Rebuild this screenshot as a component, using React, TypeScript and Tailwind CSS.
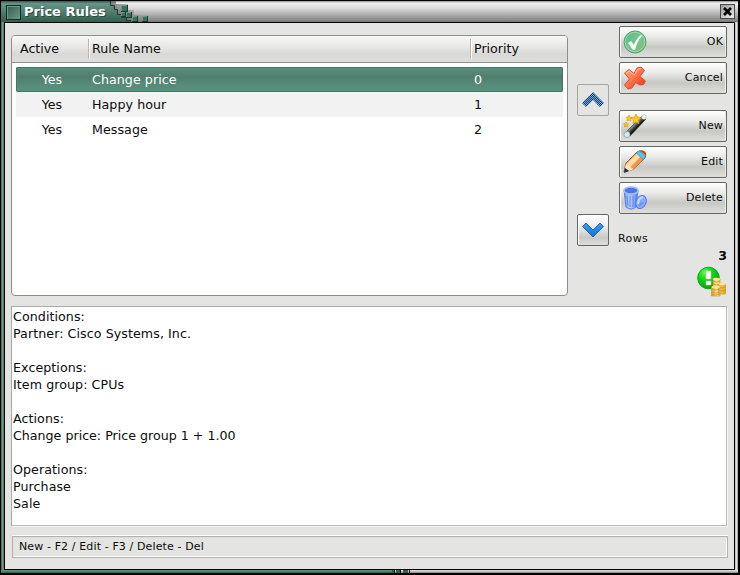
import React from 'react';

const GreenBlock = ({ x, y, s = 6 }: { x: number; y: number; s?: number }) => (
  <g>
    <rect x={x} y={y} width={s} height={s} fill="#1d3a31" />
    <rect x={x} y={y} width={s - 1} height={s - 1} fill="#6c9a8a" />
    <rect x={x + 1} y={y + 1} width={s - 2} height={s - 2} fill="#416e60" />
  </g>
);

const TitleBar = () => (
  <div className="relative flex h-[21px] shrink-0 items-center bg-[linear-gradient(#8f8f8f_0%,#f1f1f1_10%,#d9d9d9_35%,#8a8a8a_90%,#777_100%)]">
    <svg className="absolute left-0 top-0" width="160" height="21">
      <defs>
        <linearGradient id="tab" x1="0" y1="0" x2="0" y2="1">
          <stop offset="0" stopColor="#31584d" />
          <stop offset=".12" stopColor="#679485" />
          <stop offset=".5" stopColor="#517e70" />
          <stop offset="1" stopColor="#365d51" />
        </linearGradient>
        <linearGradient id="fade" x1="0" y1="0" x2="1" y2="0">
          <stop offset="0" stopColor="#333" stopOpacity=".6" />
          <stop offset="1" stopColor="#666" stopOpacity="0" />
        </linearGradient>
      </defs>
      <path d="M109 0h6v3h12v6h6v5h16v7h-40z" fill="url(#fade)" />
      <path d="M0 0H109V4H113V8H116V13H120V16H125V19H130V21H0Z" fill="url(#tab)" />
      <path d="M109.500 0V4.500H113.500V8.500H116.500V13.500H120.500V16.500H125.500V19.500H130" fill="none" stroke="#1c3a31" />
      <GreenBlock x={120} y={4} s={7} />
      <GreenBlock x={120} y={11} s={5} />
      <GreenBlock x={125} y={11} />
      <GreenBlock x={131} y={15} />
      <GreenBlock x={141} y={15} />
    </svg>
    <div className="relative ml-[5px] mt-px size-[15px] border border-[#142b24] bg-[linear-gradient(135deg,#315c4f,#6e9988)] shadow-[inset_1px_1px_0_#6b9a8a]" />
    <span className="relative ml-[3px] text-[13px] font-bold leading-[21px] text-white [text-shadow:1px_1px_0_#294c41]">Price Rules</span>
    <div className="relative ml-auto mr-[3px] flex size-[15px] items-center justify-center border border-[#444] bg-[linear-gradient(135deg,#999,#eee)]">
      <svg width="11" height="11" viewBox="0 0 11 11"><path d="M2 2L9 9M9 2L2 9" stroke="#000" strokeWidth="2.700" /></svg>
    </div>
  </div>
);

const OkIcon = () => (
  <svg width="24" height="24" viewBox="0 0 24 24">
    <defs><linearGradient id="ok" x1="0" y1="0" x2="1" y2="1"><stop offset="0" stopColor="#50ba83" /><stop offset=".5" stopColor="#78c48e" /><stop offset="1" stopColor="#82b969" /></linearGradient></defs>
    <circle cx="12" cy="12" r="11" fill="url(#ok)" stroke="#4da66d" />
    <circle cx="12" cy="12" r="9.800" fill="none" stroke="#a9ddb9" strokeWidth=".8" />
    <path d="M5 13L8 11L11 15Q13 9 18 5L19 6Q14 11 12 20H10Z" fill="#fff" />
  </svg>
);

const CancelIcon = () => (
  <svg width="24" height="24" viewBox="0 0 24 24">
    <defs><linearGradient id="no" x1="0" y1="0" x2="1" y2="1"><stop offset="0" stopColor="#ffb084" /><stop offset=".45" stopColor="#ff7650" /><stop offset="1" stopColor="#f52b04" /></linearGradient></defs>
    <path d="M1.500 7L6 3.500L11 7.500L14 2L18 1L21.500 4.500L17 10.500L22.500 15L20.500 18.500L17 19L12.500 16.500L9 22L5 23L1.500 19L6.500 13Z" fill="url(#no)" stroke="#d65131" strokeLinejoin="round" />
    <path d="M3 7.500L6 5L11.500 9L14.500 3.500L18 2.500" fill="none" stroke="#ffd0b5" strokeWidth=".8" />
  </svg>
);

const NewIcon = () => (
  <svg width="24" height="24" viewBox="0 0 24 24">
    <defs><linearGradient id="wand" x1="0" y1="0" x2="1" y2="1"><stop offset=".35" stopColor="#ccc" /><stop offset=".46" stopColor="#666" /><stop offset=".56" stopColor="#111" /></linearGradient></defs>
    <path d="M3 18L19 2L23 5L7 22Z" fill="url(#wand)" stroke="#333" strokeWidth=".6" />
    <circle cx="4" cy="20.500" r="3" fill="#d8e8ed" stroke="#819ba5" strokeWidth=".7" />
    <circle cx="21" cy="3" r="2.400" fill="#edf4f6" stroke="#aaa" strokeWidth=".5" />
    <path d="M13 0L14.500 3L18 4L15.500 6L16 9.500L13 8L10 9.500L10.500 6L8 4L11.500 3ZM6 1L7 3L9 3.500L7.500 5L8 7L6 6L4 7L4.500 5L3 3.500L5 3ZM3 8L3.800 9.500L5.500 10L4.200 11L4.500 13L3 12L1.500 13L1.800 11L.5 10L2.200 9.500Z" fill="#ffc81c" stroke="#d99916" strokeWidth=".7" />
  </svg>
);

const EditIcon = () => (
  <svg width="24" height="24" viewBox="0 0 24 24">
    <path d="M1 22L3 13L14 2Q17 0 20 1Q24 3 22 8L11 19Z" fill="#f7ad63" stroke="#9d5c31" />
    <path d="M4 14L14 4L17 7L7 17Z" fill="#ffdfad" />
    <path d="M8 17L18 7L21 9L11 19Z" fill="#e9954b" />
    <path d="M13 3L16 .8Q20 3 22.500 7L20 10Q17 6 13 3Z" fill="#55c5e7" stroke="#3784a5" strokeWidth=".5" />
    <path d="M17 .8Q21-.5 23 3V6Q20 2.500 17 .8Z" fill="#ab493a" />
    <path d="M3 14L6 15L8 18L11 19L6 21L2 18Z" fill="#ffe3ba" />
    <path d="M2 18L6 21L1 23Z" fill="#26267a" />
  </svg>
);

const DeleteIcon = () => (
  <svg width="24" height="24" viewBox="0 0 24 24">
    <defs><linearGradient id="bin" x1="0" y1="0" x2="1" y2="0"><stop offset="0" stopColor="#6c92f5" /><stop offset=".4" stopColor="#b8d0ff" /><stop offset="1" stopColor="#5f88f2" /></linearGradient></defs>
    <path d="M1 4L3 21Q8 25 13 21L15 4Z" fill="url(#bin)" stroke="#5a7fe8" />
    <path d="M4 10L5 20M7 10V21M10 10V21M13 9L12 20" stroke="#6488e8" strokeWidth="1" />
    <ellipse cx="8" cy="4.500" rx="7" ry="3.500" fill="#4f75df" stroke="#9dbdff" strokeWidth="1.600" />
    <ellipse cx="18" cy="16" rx="5" ry="6.800" transform="rotate(24 18 16)" fill="#8aadff" stroke="#5379ea" />
    <path d="M15 18Q15 12 20 11" fill="none" stroke="#c4d8ff" strokeWidth="2" />
    <path d="M16 20L20 16" stroke="#6d92f5" strokeWidth="2" />
  </svg>
);

const ActionButton = ({ label, children }: { label: string; children: React.ReactNode }) => (
  <button className="flex h-8 w-full items-center justify-between rounded-[2px] border border-[#65685f] bg-[linear-gradient(#fff_0%,#e8e9e6_35%,#c6c8c2_67%,#d1d2ce_80%,#dedfdc_100%)] pl-[3px] pr-[3px] text-[11px] tracking-[0.15px] shadow-[inset_1px_1px_0_#fff,inset_-1px_0_0_#eee]">
    {children}<span className="pt-px">{label}</span>
  </button>
);

const ArrowButton = ({ up = false }: { up?: boolean }) => (
  <button className={up ? 'flex size-8 items-center justify-center rounded-[2px] border border-[#a4a4a1] bg-[#e4e4e2]' : 'flex size-8 items-center justify-center rounded-[2px] border border-[#65685f] bg-[linear-gradient(#fff,#eee_35%,#c9cac6_75%,#ddd)] shadow-[inset_1px_1px_0_#fff]'}>
    <svg width="24" height="24" viewBox="0 0 24 24">
      <defs>
        <pattern id="dots" width="2" height="2" patternUnits="userSpaceOnUse"><path d="M0 0h2v2H0z" fill="#79a7d1" /><path d="M0 0h1v1H0zM1 1h1v1H1z" fill="#173f77" /></pattern>
        <linearGradient id="down" x1="0" y1="0" x2="0" y2="1"><stop offset="0" stopColor="#459fef" /><stop offset="1" stopColor="#086fda" /></linearGradient>
      </defs>
      {up ? <path d="M1 15L12 4L23 15L19 19L12 12L5 19Z" fill="url(#dots)" /> : <path d="M1.500 8.500L5 5L12 12L19 5L22.500 8.500L12 19Z" fill="url(#down)" stroke="#2464b0" />}
    </svg>
  </button>
);

const CoinsIcon = () => (
  <svg width="30" height="31" viewBox="0 0 30 31">
    <defs>
      <radialGradient id="green" cx=".35" cy=".25" r=".8"><stop offset="0" stopColor="#70f75d" /><stop offset=".4" stopColor="#13d916" /><stop offset="1" stopColor="#009d0c" /></radialGradient>
      <linearGradient id="gold" x1="0" x2="1"><stop offset="0" stopColor="#d99a26" /><stop offset=".35" stopColor="#ffe18a" /><stop offset="1" stopColor="#e5a322" /></linearGradient>
    </defs>
    <circle cx="11.500" cy="12" r="10.800" fill="url(#green)" stroke="#0aaa13" />
    <rect x="9" y="5" width="5" height="8" fill="#fff" stroke="#bdc3bd" strokeWidth=".6" />
    <rect x="9" y="15" width="5" height="4" fill="#fff" stroke="#bdc3bd" strokeWidth=".6" />
    <path d="M16 13h7v8h-7zM21.500 18h7v10h-7zM14.500 21h8.500v9h-8.500z" fill="url(#gold)" stroke="#c98d20" strokeWidth=".6" />
    <path d="M16 15q4 2 7 0M16 18q4 2 7 0M22 21q3 2 6.500 0M22 24q3 2 6.500 0M14.500 23q4 2 8.500 0M14.500 26q4 2 8.500 0M14.500 28q4 2 8.500 0" fill="none" stroke="#cc8d1f" strokeWidth=".7" />
    <ellipse cx="19.500" cy="13" rx="3.700" ry="1.300" fill="#ffe597" /><ellipse cx="25" cy="18" rx="3.500" ry="1.300" fill="#ffe597" /><ellipse cx="18.800" cy="21" rx="4.300" ry="1.300" fill="#ffe597" />
  </svg>
);

const rows = [
  { name: 'Change price', priority: 0, style: 'rounded-[2px] bg-[linear-gradient(#58927e,#507e6e_40%,#568b79_70%,#58917e)] text-white shadow-[inset_0_0_0_1px_#487565]' },
  { name: 'Happy hour', priority: 1, style: 'bg-[#f2f2f2]' },
  { name: 'Message', priority: 2, style: '' },
];

const details = ['Conditions:', 'Partner: Cisco Systems, Inc.', '', 'Exceptions:', 'Item group: CPUs', '', 'Actions:', 'Change price: Price group 1 + 1.00', '', 'Operations:', 'Purchase', 'Sale'];

export default function App() {
  return (
    <div className="flex h-[575px] w-[740px] flex-col overflow-hidden bg-black pb-[2px] pl-px pr-[2px] pt-px font-['DejaVu_Sans',sans-serif] text-[12.65px] text-[#0c0c0c]">
      <TitleBar />
      <div className="flex min-h-0 flex-1">
        <div className="w-[3px] bg-[linear-gradient(90deg,#345a4e,#729d8d_40%,#4c7768)]" />
        <div className="flex w-[731px] flex-col border border-black bg-[#e4e4e2] pl-[6px] pr-[6px]">
          <div className="flex h-[283px]">
            <div className="mt-[12px] h-[261px] w-[557px] shrink-0 overflow-hidden rounded-[4px] border border-[#8d8d89] bg-white">
              <div className="flex h-[27px] items-center border-b border-[#90908d] bg-[linear-gradient(#f7f7f6,#e6e6e4_45%,#d8d8d6_70%,#dededc)] pb-px">
                <div className="w-[76px] pl-[8px] leading-5">Active</div>
                <div className="w-[382px] border-l border-[#b6b6b2] pl-[3px] leading-5 shadow-[inset_1px_0_0_#fff]">Rule Name</div>
                <div className="flex-1 border-l border-[#b6b6b2] pl-[3px] leading-5 shadow-[inset_1px_0_0_#fff]">Priority</div>
              </div>
              <div className="mx-[4px] mt-[4px]">
                {rows.map((row) => (
                  <div key={row.name} className={`flex h-[25px] items-center pt-px ${row.style}`}>
                    <span className="w-[72px] text-center">Yes</span>
                    <span className="w-[382px] pl-[4px] tracking-[0.06px]">{row.name}</span>
                    <span className="pl-[4px]">{row.priority}</span>
                  </div>
                ))}
              </div>
            </div>
            <div className="ml-[9px] flex flex-col gap-[98px] pt-[61px]"><ArrowButton up /><ArrowButton /></div>
            <div className="ml-[9px] flex w-[109px] shrink-0 flex-col pt-[3px] text-[11px]">
              <div className="flex flex-col gap-1 pl-px">
                <ActionButton label="OK"><OkIcon /></ActionButton>
                <ActionButton label="Cancel"><CancelIcon /></ActionButton>
              </div>
              <div className="mt-4 flex flex-col gap-1 pl-px">
                <ActionButton label="New"><NewIcon /></ActionButton>
                <ActionButton label="Edit"><EditIcon /></ActionButton>
                <ActionButton label="Delete"><DeleteIcon /></ActionButton>
              </div>
              <div className="mt-[17px] leading-4 tracking-[0.4px]">Rows</div>
              <div className="mt-px text-right text-[12.650px] font-bold leading-4">3</div>
              <div className="mt-[2px] flex justify-end"><CoinsIcon /></div>
            </div>
          </div>
          <div className="h-[220px] w-[716px] border border-b-[#bababa] border-l-[#aaa] border-r-[#bababa] border-t-[#aaa] bg-white pl-px pt-px leading-[17px] shadow-[1px_1px_0_#f7f7f5]">
            {details.map((line, index) => <div key={index} className={`h-[17px] whitespace-pre ${line.length > 30 ? '' : 'tracking-[0.07px]'}`}>{line}</div>)}
          </div>
          <div className="ml-px mt-[10px] flex h-[22px] w-[716px] items-center border border-[#b2b2af] pl-[6px] text-[11px] tracking-[0.12px] shadow-[inset_1px_1px_0_#ddd,inset_-1px_-1px_0_#fff,0_-1px_0_#fff]">
            New - F2 / Edit - F3 / Delete - Del
          </div>
        </div>
        <div className="w-[3px] bg-[linear-gradient(90deg,#aaa,#eee_40%,#999)]" />
      </div>
      <div className="flex h-[3px] shrink-0 bg-[linear-gradient(#ededed,#bbb,#888)]">
        <div className="w-[391px] bg-[linear-gradient(#6d9989,#527e70,#345c50)]" />
        <svg width="19" height="3"><path d="M0 0h2v3H0zM4 0h4v3H4zM11 0h5v3h-5z" fill="#345e50" /><path d="M2 0h1v3H2zM8 0h1v3H8zM17 0h1v3h-1z" fill="#111" /></svg>
      </div>
    </div>
  );
}
